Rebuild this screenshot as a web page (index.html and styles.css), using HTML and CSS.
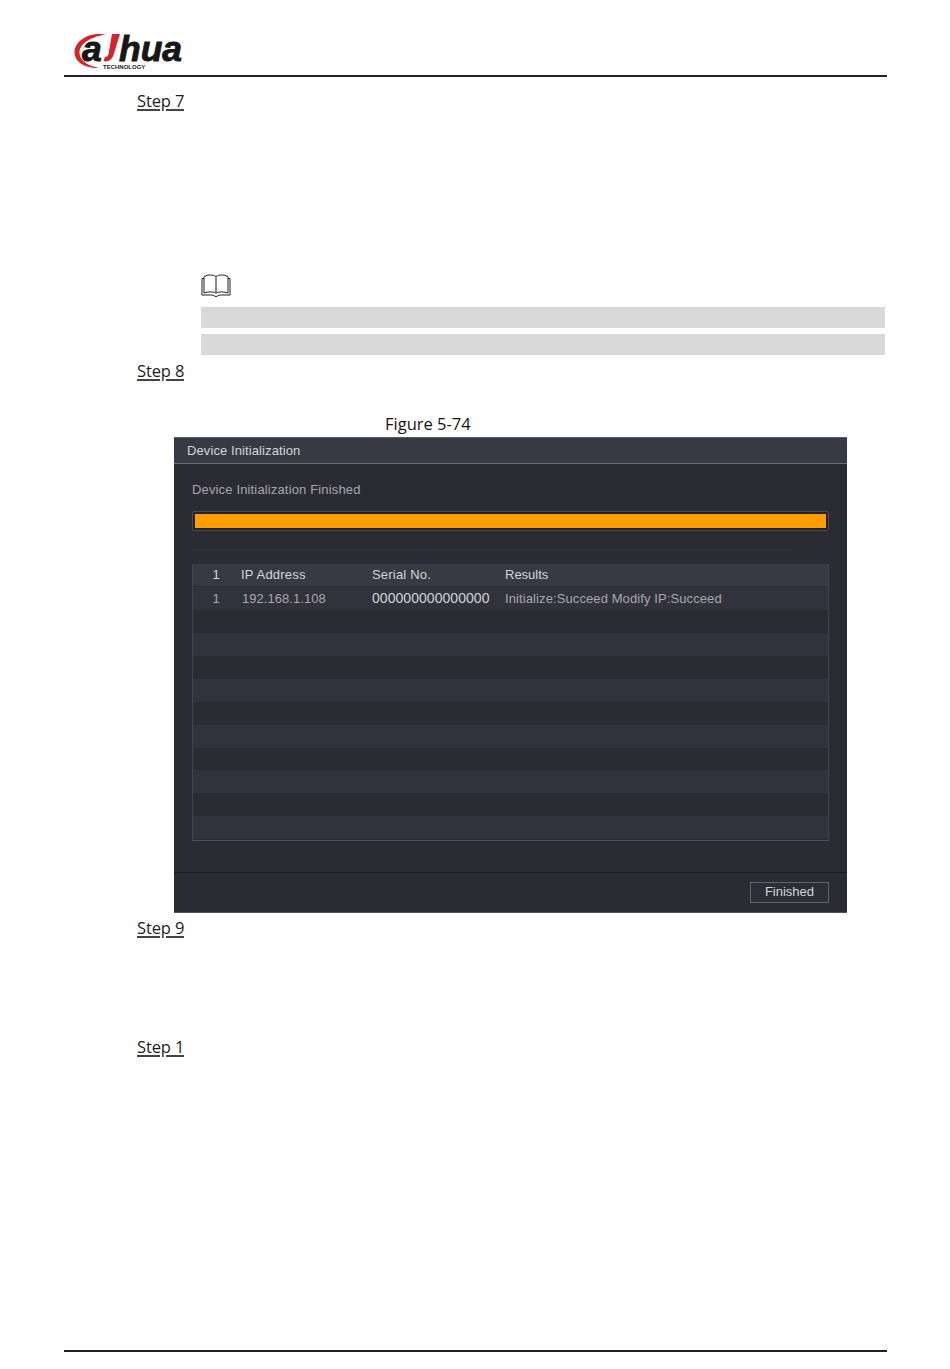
FILE: index.html
```html
<!DOCTYPE html>
<html lang="en">
<head>
<meta charset="utf-8">
<title>Device Initialization</title>
<link rel="stylesheet" href="styles.css">
</head>
<body>
<div class="page">
  <header class="header">
    <svg class="logo" width="120" height="56" viewBox="70 16 120 56" aria-label="alhua">
      <path d="M106 34.500C90 31.500 75 40 74.500 52C74.500 62 85 68.500 99 68C89 66 79 61 79.500 52C80 43 92 36.500 106 34.500Z" fill="#d7242a"/>
      <path d="M112 34L120 34L113.500 55C112 60 107 62.500 103.500 61L105 57C107 57 108 56 108.500 54Z" fill="#d7242a"/>
      <text class="logo-word" x="82" y="61">a</text>
      <text class="logo-word" x="119" y="61">hua</text>
      <text class="logo-sub" x="103" y="68.500">TECHNOLOGY</text>
    </svg>
  </header>
  <main class="content">
    <div class="step step-7">Step 7</div>
    <div class="note">
      <svg class="book" width="30" height="24" viewBox="0 0 30 24">
        <path d="M3 2.500C7 .5 12 .5 15 2.500C18 .5 23 .5 27 2.500V19C23 17.500 18 17.500 15 19C12 17.500 7 17.500 3 19Z" fill="#fff" stroke="#222" stroke-width="1"/>
        <path d="M15 2.500V19" stroke="#666" stroke-width="1.500" fill="none"/>
        <path d="M3 4.500H1V21H11C12.500 21 13.500 22.500 15 22.500C16.500 22.500 17.500 21 19 21H29V4.500H27" fill="none" stroke="#222" stroke-width="1"/>
      </svg>
      <div class="note-bar"></div>
      <div class="note-bar"></div>
    </div>
    <div class="step step-8">Step 8</div>
    <div class="caption">Figure 5-74</div>
    <section class="dialog">
      <div class="dialog-title">Device Initialization</div>
      <div class="dialog-body">
        <div class="status">Device Initialization Finished</div>
        <div class="progress"><div class="progress-fill"></div></div>
        <div class="rule"></div>
        <div class="table">
          <div class="row head">
            <span class="num">1</span><span class="wide">IP Address</span><span class="wide">Serial No.</span><span>Results</span>
          </div>
          <div class="row first">
            <span class="num">1</span><span class="ip">192.168.1.108</span><span class="serial">000000000000000</span><span class="result">Initialize:Succeed Modify IP:Succeed</span>
          </div>
          <div class="row"></div><div class="row alt"></div>
          <div class="row"></div><div class="row alt"></div>
          <div class="row"></div><div class="row alt"></div>
          <div class="row"></div><div class="row alt"></div>
          <div class="row"></div><div class="row alt"></div>
        </div>
      </div>
      <div class="dialog-foot"><div class="button">Finished</div></div>
    </section>
    <div class="step step-9">Step 9</div>
    <div class="step step-10">Step 1</div>
  </main>
  <footer class="footer"></footer>
</div>
</body>
</html>
```
FILE: styles.css
```css
* { box-sizing: border-box; }
html, body { margin: 0; padding: 0; background: #fff; }
.page {
  width: 950px;
  height: 1369px;
  display: flex;
  flex-direction: column;
  padding: 0 63px 0 64px;
  font-family: "Liberation Sans", Arial, sans-serif;
}
.header {
  height: 77px;
  flex: none;
  border-bottom: 2px solid #222;
  padding: 16px 0 0 6px;
}
.logo { display: block; }
.logo-word { font: italic 700 35.500px "Liberation Sans", Arial, sans-serif; fill: #161616; stroke: #161616; stroke-width: .9px; }
.logo-sub { font: 700 6px "Liberation Sans", Arial, sans-serif; fill: #222; }
.content { flex: 1; position: relative; }
.step {
  width: 47px;
  height: 20px;
  margin-left: 73px;
  overflow: hidden;
  white-space: nowrap;
  font: 400 16.500px/20px "Open Sans", sans-serif;
  letter-spacing: -.12px;
  color: #1c1c1c;
  text-decoration: underline;
  text-decoration-thickness: 2px;
  text-underline-offset: 2px;
  text-decoration-color: #444;
}
.step-7 { margin-top: 14px; }
.note { margin: 163px 2px 0 137px; }
.book { display: block; margin-bottom: 9px; }
.note-bar { height: 21px; background: #d9d9d9; margin-bottom: 6px; }
.step-8 { margin-top: 1px; }
.caption {
  margin: 31px 0 0 321px;
  height: 24px;
  font: 400 16.500px/24px "Open Sans", sans-serif;
  color: #161616;
}
.dialog {
  margin: 1px 0 0 109.500px;
  width: 673.500px;
  height: 476px;
  background: #2a2b33;
  display: flex;
  flex-direction: column;
  color: #a6a8ad;
  font-size: 13px;
}
.dialog-title {
  height: 27px;
  flex: none;
  padding-left: 13.500px;
  line-height: 25px;
  color: #d4d5d8;
  background: #383a43;
  border-top: 1px solid #5a5c63;
  border-bottom: 1px solid #6d6f76;
  letter-spacing: .1px;
}
.dialog-body { flex: 1; padding: 0 18px 0 18.500px; }
.status { margin-top: 16px; height: 20px; line-height: 20px; letter-spacing: .15px; }
.progress {
  margin-top: 11px;
  height: 20px;
  padding: 2px;
  border: 1px solid #4a4c55;
  border-radius: 2px;
  background: #22232a;
}
.progress-fill { height: 100%; background: #ff9c00; }
.rule { width: 600px; height: 1px; margin-top: 18px; background: #32333b; }
.table {
  margin-top: 14px;
  height: 276.500px;
  border-left: 1px solid #42444c;
  border-right: 1px solid #42444c;
  border-bottom: 1px solid #4e5058;
}
.row {
  height: 22.950px;
  display: grid;
  grid-template-columns: 48px 131px 133px 1fr;
  align-items: center;
  white-space: nowrap;
}
.row.alt { background: #31323b; }
.row.head { background: #383a43; color: #d4d5d8; border-bottom: 1px solid #2a2b33; }
.row.first { background: #31323b; }
.num { text-align: center; padding-right: 2px; }
.wide { letter-spacing: .2px; }
.ip { letter-spacing: .05px; padding-left: 1px; }
.result { letter-spacing: .1px; }
.serial { color: #d0d2d6; font-size: 14px; letter-spacing: .05px; }
.dialog-foot {
  height: 41px;
  flex: none;
  padding: 9px 18px 0 0;
  border-top: 1px solid #1c1d22;
  border-bottom: 1px solid #50525a;
  display: flex;
  justify-content: flex-end;
  align-items: flex-start;
}
.button {
  width: 79px;
  height: 21px;
  border: 1px solid #5c646c;
  background: #2c2e36;
  color: #d4d5d8;
  text-align: center;
  line-height: 18px;
}
.step-9 { margin-top: 5px; }
.step-10 { margin-top: 99px; }
.footer { height: 19px; flex: none; border-top: 2px solid #222; }
```
